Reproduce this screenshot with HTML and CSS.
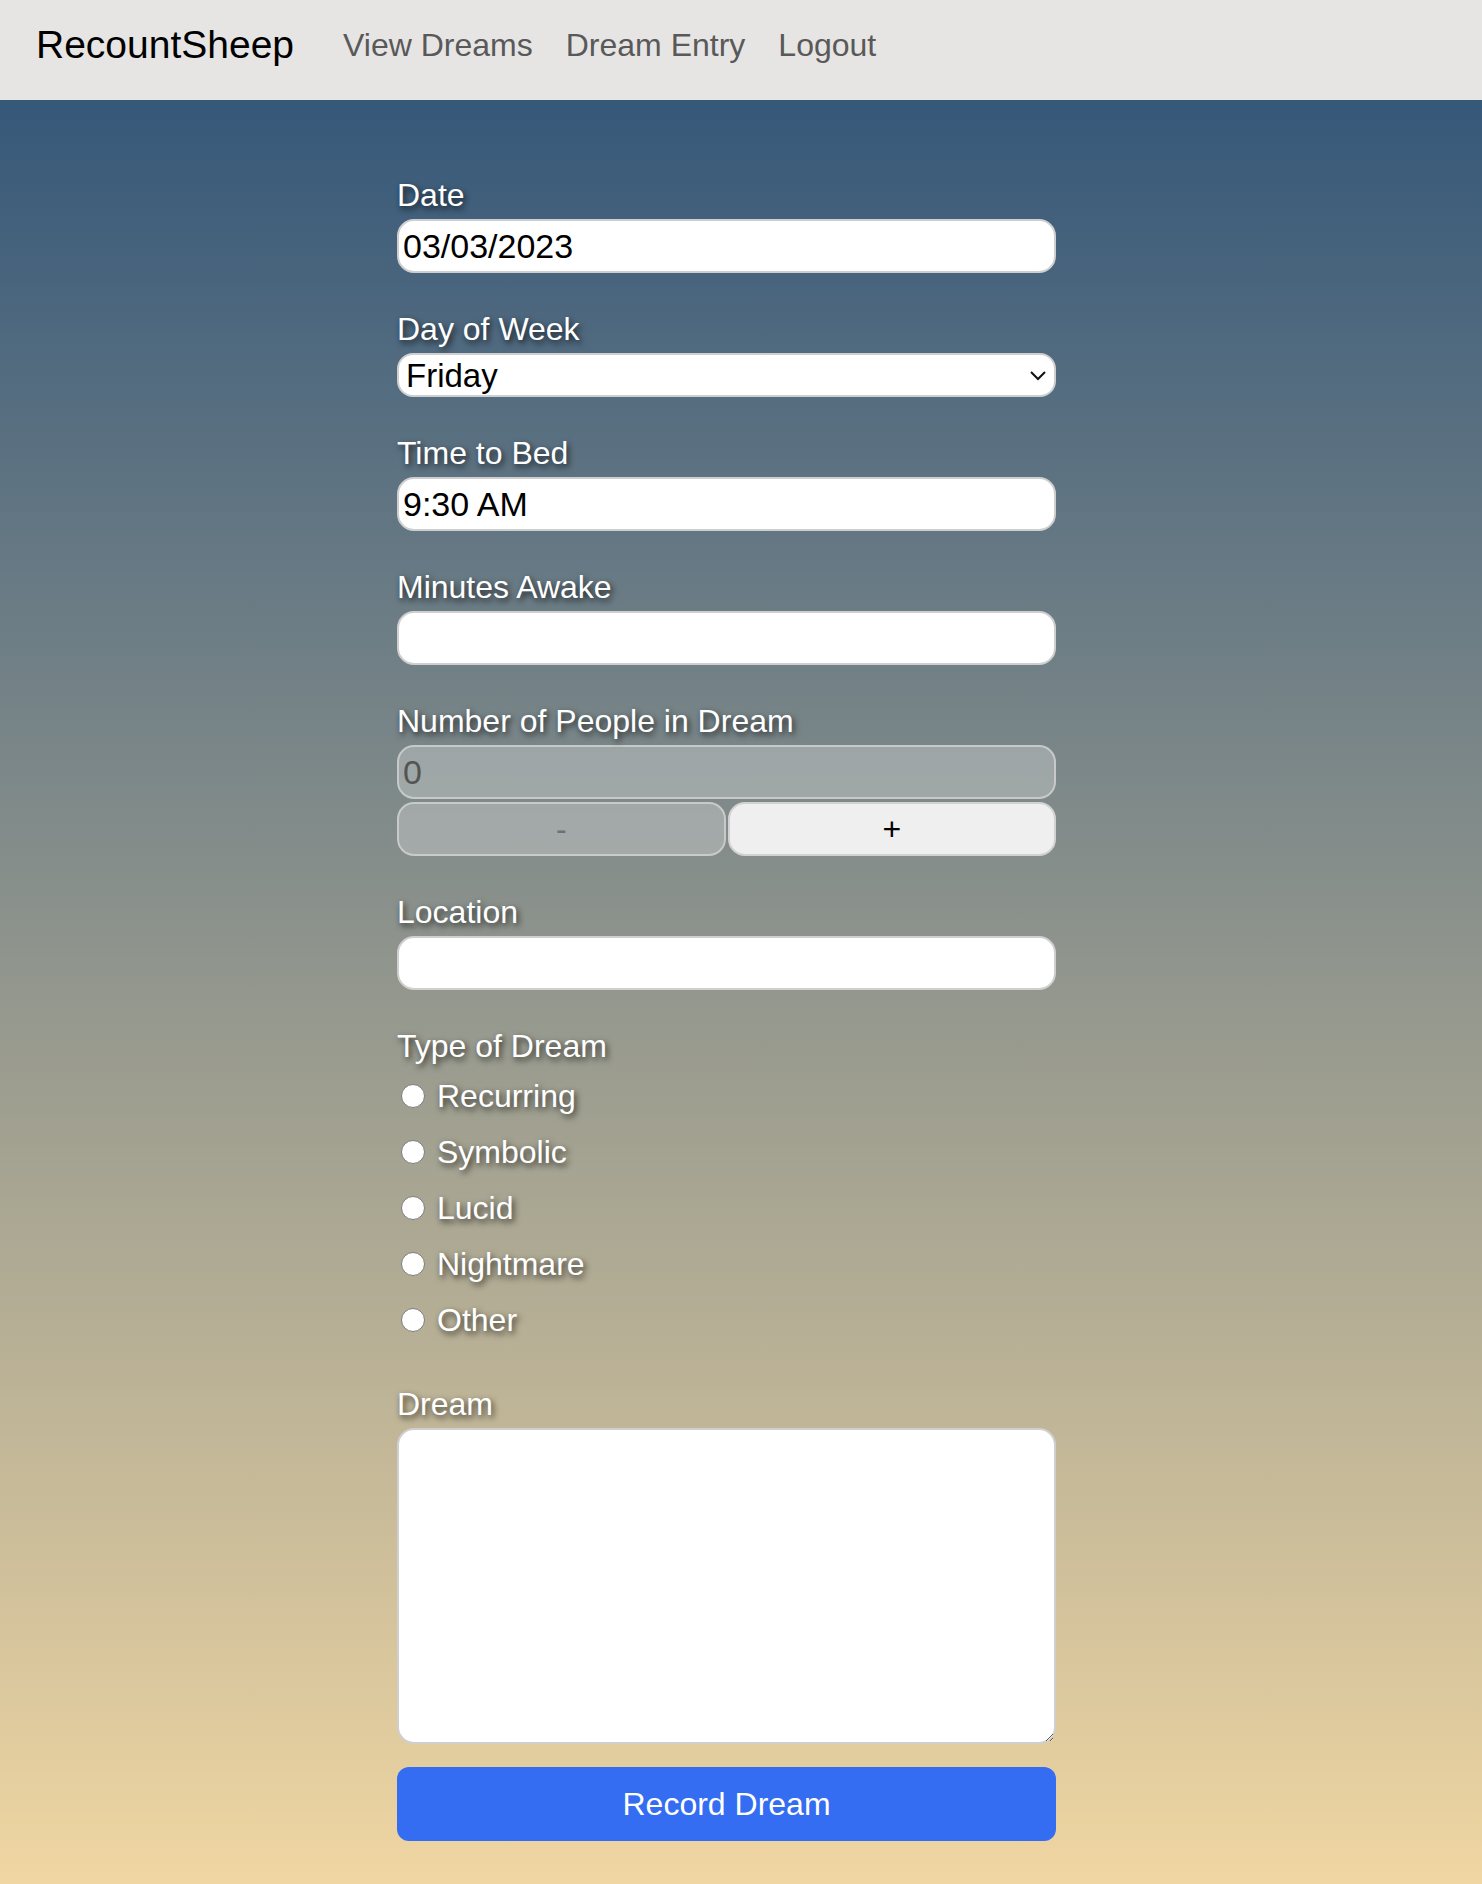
FILE: index.html
```html
<!DOCTYPE html>
<html lang="en">
<head>
<meta charset="utf-8">
<title>RecountSheep - Dream Entry</title>
<link rel="stylesheet" href="styles.css">
</head>
<body>
<nav class="navbar">
  <a class="brand" href="#">RecountSheep</a>
  <div class="nav-links">
    <a class="nav-link" href="#">View Dreams</a>
    <a class="nav-link" href="#">Dream Entry</a>
    <a class="nav-link" href="#">Logout</a>
  </div>
</nav>
<main class="page">
  <form class="dream-form">
    <div class="group">
      <label class="field-label" for="date">Date</label>
      <input class="field" id="date" type="text" value="03/03/2023">
    </div>
    <div class="group">
      <label class="field-label" for="dow">Day of Week</label>
      <div class="select-wrap">
        <select class="field select" id="dow">
          <option>Friday</option>
        </select>
        <svg class="chevron" width="18" height="12" viewBox="0 0 18 12"><path d="M2 3 L9 10 L16 3" fill="none" stroke="#111" stroke-width="2"/></svg>
      </div>
    </div>
    <div class="group">
      <label class="field-label" for="bed">Time to Bed</label>
      <input class="field" id="bed" type="text" value="9:30 AM">
    </div>
    <div class="group">
      <label class="field-label" for="awake">Minutes Awake</label>
      <input class="field" id="awake" type="text" value="">
    </div>
    <div class="group">
      <label class="field-label" for="people">Number of People in Dream</label>
      <input class="field field-disabled" id="people" type="text" value="0" disabled>
      <div class="stepper">
        <button type="button" class="step step-disabled" disabled>-</button>
        <button type="button" class="step">+</button>
      </div>
    </div>
    <div class="group">
      <label class="field-label" for="loc">Location</label>
      <input class="field" id="loc" type="text" value="">
    </div>
    <div class="group">
      <div class="field-label radio-title">Type of Dream</div>
      <label class="radio-row"><input type="radio" name="type" class="radio"><span>Recurring</span></label>
      <label class="radio-row"><input type="radio" name="type" class="radio"><span>Symbolic</span></label>
      <label class="radio-row"><input type="radio" name="type" class="radio"><span>Lucid</span></label>
      <label class="radio-row"><input type="radio" name="type" class="radio"><span>Nightmare</span></label>
      <label class="radio-row"><input type="radio" name="type" class="radio"><span>Other</span></label>
    </div>
    <div class="group group-last">
      <label class="field-label" for="dream">Dream</label>
      <textarea class="field textarea" id="dream"></textarea>
    </div>
    <button type="button" class="submit">Record Dream</button>
  </form>
</main>
</body>
</html>
```
FILE: styles.css
```css
* { box-sizing: border-box; }
html, body { margin: 0; padding: 0; }
body {
  font-family: "Liberation Sans", Arial, Helvetica, sans-serif;
  min-height: 100vh;
  display: flex;
  flex-direction: column;
}
.navbar {
  height: 100px;
  background: #e6e5e3;
  display: flex;
  align-items: center;
  padding: 0 0 10px 36px;
}
.brand {
  font-size: 39px;
  color: #000;
  text-decoration: none;
  margin-right: 49px;
}
.nav-links {
  display: flex;
  gap: 33px;
}
.nav-link {
  font-size: 32px;
  color: #595959;
  text-decoration: none;
}
.page {
  flex: 1;
  background: linear-gradient(to bottom, #365879 0%, #f0d6a2 100%);
  padding: 76px 0 43px 0;
}
.dream-form {
  width: 659px;
  margin-left: 397px;
}
.group { margin-bottom: 37px; }
.group-last { margin-bottom: 23px; }
.field-label {
  display: block;
  font-size: 32px;
  line-height: 38px;
  color: #fff;
  text-shadow: 2px 3px 6px rgba(0, 0, 0, 0.75);
  margin-bottom: 5px;
}
.radio-title { margin-bottom: 3px; }
.field {
  display: block;
  width: 100%;
  height: 54px;
  border: 2px solid #cfcfcf;
  border-radius: 17px;
  background: #fff;
  font-family: "Liberation Sans", Arial, Helvetica, sans-serif;
  font-size: 34px;
  color: #000;
  padding: 0 4px;
  outline: none;
}
.field-disabled {
  background: rgba(239, 239, 239, 0.3);
  border-color: rgba(210, 210, 210, 0.8);
  color: #545454;
}
.select-wrap { position: relative; }
.select {
  height: 44px;
  appearance: none;
  -webkit-appearance: none;
  padding: 0 7px;
  font-size: 33px;
  border-radius: 16px;
}
.chevron {
  position: absolute;
  right: 9px;
  top: 16px;
  pointer-events: none;
}
.stepper {
  display: grid;
  grid-template-columns: 1fr 1fr;
  gap: 2px;
  margin-top: 3px;
}
.step {
  height: 54px;
  border: 2px solid #d2d2d2;
  border-radius: 17px;
  background: #efefef;
  font-family: "Liberation Sans", Arial, Helvetica, sans-serif;
  font-size: 32px;
  color: #000;
  padding: 0;
}
.step-disabled {
  background: rgba(239, 239, 239, 0.3);
  border-color: rgba(210, 210, 210, 0.8);
  color: #707070;
}
.radio-row {
  display: flex;
  align-items: center;
  height: 56px;
  font-size: 32px;
  color: #fff;
  text-shadow: 2px 3px 6px rgba(0, 0, 0, 0.75);
}
.radio {
  appearance: none;
  -webkit-appearance: none;
  width: 24px;
  height: 24px;
  border: 1.5px solid #7a7a7a;
  border-radius: 50%;
  background: #fff;
  margin: 0 12px 0 4px;
}
.textarea {
  height: 316px;
  resize: vertical;
  border-radius: 17px;
  padding: 4px;
}
.submit {
  display: block;
  width: 100%;
  height: 74px;
  border: none;
  border-radius: 12px;
  background: #346cf2;
  color: #fff;
  font-family: "Liberation Sans", Arial, Helvetica, sans-serif;
  font-size: 32px;
}
```
